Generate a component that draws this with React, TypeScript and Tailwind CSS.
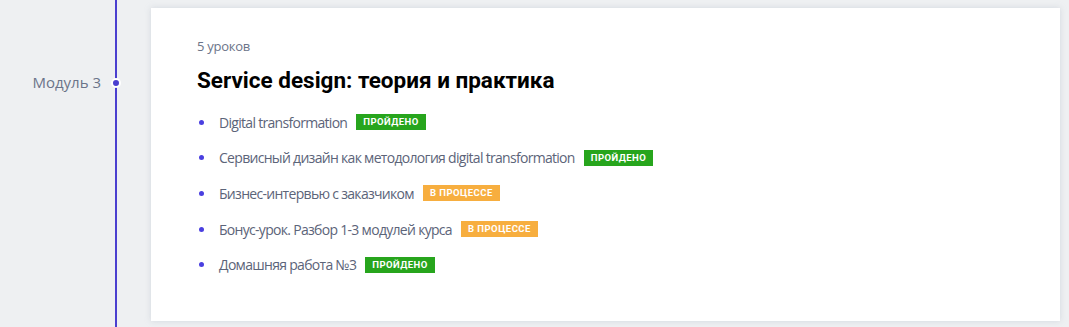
const lessons: { title: string; status: "done" | "progress" }[] = [
  { title: "Digital transformation", status: "done" },
  { title: "Сервисный дизайн как методология digital transformation", status: "done" },
  { title: "Бизнес-интервью с заказчиком", status: "progress" },
  { title: "Бонус-урок. Разбор 1-3 модулей курса", status: "progress" },
  { title: "Домашняя работа №3", status: "done" },
];

function Badge({ status }: { status: "done" | "progress" }) {
  if (status === "done") {
    return (
      <span className="inline-flex h-[16px] items-center bg-[#27a51d] px-[7px] font-['Roboto',sans-serif] text-[9.5px] font-bold tracking-[0.05em] text-white">
        ПРОЙДЕНО
      </span>
    );
  }
  return (
    <span className="inline-flex h-[16px] items-center bg-[#f7ae3f] px-[7px] font-['Roboto',sans-serif] text-[9.5px] font-bold tracking-[0.05em] text-white">
      В ПРОЦЕССЕ
    </span>
  );
}

export default function App() {
  return (
    <div className="flex h-[327px] w-[1069px] overflow-hidden bg-[#eef0f2] font-['Open_Sans',sans-serif]">
      <div className="w-[115px] shrink-0 pr-[14px] pt-[71px] text-right text-[15px] text-[#6b7489]">
        Модуль 3
      </div>
      <div className="relative w-[2px] shrink-0 bg-[#4a3fcf]">
        <span className="absolute left-[-4px] top-[78px] h-[10px] w-[10px] rounded-full border-2 border-white bg-[#4a3fcf]" />
      </div>
      <div className="ml-[34px] mt-[8px] h-[313px] w-[909px] shrink-0 bg-white pl-[46px] pt-[29px] shadow-[0_0_6px_rgba(160,170,185,0.35)]">
        <div className="text-[13px] leading-[18px] tracking-[-0.02em] text-[#6b7489]">5 уроков</div>
        <h2 className="mt-[10px] font-['Roboto',sans-serif] text-[22.5px] font-bold leading-[30px] text-black">
          Service design: теория и практика
        </h2>
        <ul className="mt-[17px] flex flex-col gap-[15.7px]">
          {lessons.map((l) => (
            <li key={l.title} className="flex h-[20px] items-center">
              <span className="ml-[2px] h-[5px] w-[5px] rounded-full bg-[#4a3fe0]" />
              <span className="ml-[15px] text-[14px] tracking-[-0.05em] text-[#5c6479]">{l.title}</span>
              <span className="ml-[9px] flex items-center">
                <Badge status={l.status} />
              </span>
            </li>
          ))}
        </ul>
      </div>
    </div>
  );
}
